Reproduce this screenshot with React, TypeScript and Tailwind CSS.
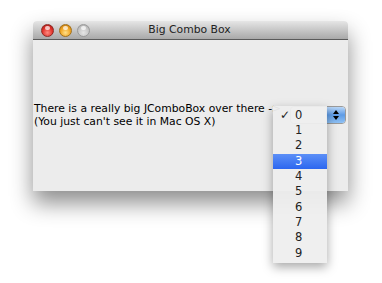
import React from "react";

const items = ["0", "1", "2", "3", "4", "5", "6", "7", "8", "9"];

function Light({ color }: { color: "red" | "yellow" | "grey" }) {
  const bg =
    color === "red"
      ? "bg-[radial-gradient(circle_at_50%_70%,#ff8a80_0%,#e0312a_55%,#9b1712_100%)] border-[#8e2a25]"
      : color === "yellow"
        ? "bg-[radial-gradient(circle_at_50%_70%,#ffe08a_0%,#f0a320_55%,#b36b0a_100%)] border-[#a0701c]"
        : "bg-[radial-gradient(circle_at_50%_70%,#e6e6e6_0%,#c4c4c4_60%,#a4a4a4_100%)] border-[#9a9a9a]";
  return (
    <div className={`relative h-[13px] w-[13px] rounded-full border ${bg}`}>
      <div className="absolute left-[3px] top-[1px] h-[4px] w-[5px] rounded-full bg-white/70" />
    </div>
  );
}

export default function App() {
  return (
    <div
      className="relative h-[283px] w-[382px] overflow-hidden bg-white"
      style={{ fontFamily: '"DejaVu Sans", "Liberation Sans", sans-serif' }}
    >
      {/* window */}
      <div className="ml-[33px] mt-[21px] w-[315px] rounded-t-[4px] shadow-[0_12px_22px_rgba(0,0,0,0.45)]">
        <div className="flex h-[19px] items-center rounded-t-[4px] border-b border-[#5a5a5a] bg-gradient-to-b from-[#e6e6e6] to-[#a9a9a9] pl-[8px]">
          <div className="flex gap-[5px]">
            <Light color="red" />
            <Light color="yellow" />
            <Light color="grey" />
          </div>
          <div className="flex-1 pr-[59px] text-center text-[10.8px] leading-none text-[#222]">
            Big Combo Box
          </div>
        </div>
        <div className="h-[151px] bg-[#ececec] pt-[62px] pl-[1px] text-[10.8px] leading-[13px] text-black">
          <div className="whitespace-nowrap">
            There is a really big JComboBox over there -&gt;
            <br />
            (You just can't see it in Mac OS X)
          </div>
        </div>
      </div>

      {/* combo box */}
      <div className="absolute left-[290px] top-[106px] flex h-[18px] w-[56px] items-stretch rounded-[4px] border border-[#9a9a9a] bg-white">
        <div className="flex-1" />
        <div className="flex w-[19px] flex-col items-center justify-center gap-[2px] rounded-r-[3px] bg-gradient-to-b from-[#b9d6f6] via-[#5d9be6] to-[#8fc1f4]">
          <div className="h-0 w-0 border-x-[3px] border-b-[4px] border-x-transparent border-b-black" />
          <div className="h-0 w-0 border-x-[3px] border-t-[4px] border-x-transparent border-t-black" />
        </div>
      </div>

      {/* popup */}
      <div className="absolute left-[273px] top-[106px] w-[54px] bg-[#eeeeee]/95 py-[2px] text-[11.5px] shadow-[0_4px_10px_rgba(0,0,0,0.35)]">
        {items.map((n) => (
          <div
            key={n}
            className={`relative flex h-[15.3px] items-center pl-[22px] leading-none ${
              n === "3" ? "bg-gradient-to-b from-[#5c8ff7] to-[#2c66ef] text-white" : "text-[#222]"
            }`}
          >
            {n === "0" && <span className="absolute left-[7px] top-[1px] text-[12px]">✓</span>}
            {n}
          </div>
        ))}
      </div>
    </div>
  );
}
